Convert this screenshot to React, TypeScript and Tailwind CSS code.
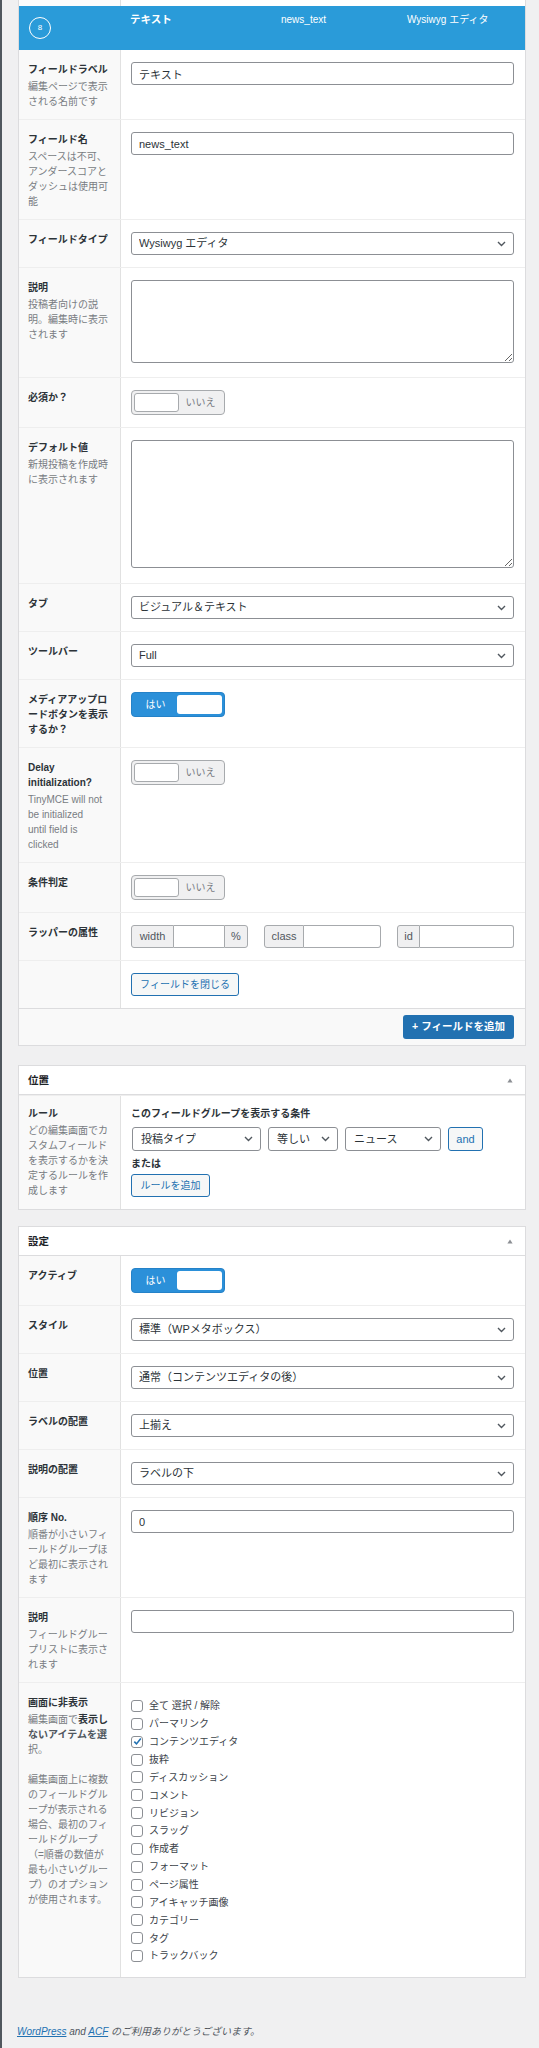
import React from 'react';

type Line = React.ReactNode;

function Chevron() {
  return (
    <svg width="9" height="6" viewBox="0 0 9 6" className="shrink-0">
      <path d="M1 1l3.5 3.5L8 1" fill="none" stroke="#50575e" strokeWidth="1.4" />
    </svg>
  );
}

function Select({ value, className = 'w-full' }: { value: string; className?: string }) {
  return (
    <div className={`flex items-center justify-between h-[23px] pl-[7px] pr-[7px] bg-white border border-[#8c8f94] rounded-[3px] text-[11px] text-[#2c3338] ${className}`}>
      <span className="truncate">{value}</span>
      <Chevron />
    </div>
  );
}

function TextInput({ value }: { value: string }) {
  return (
    <input
      readOnly
      defaultValue={value}
      className="block w-full h-[23px] px-[7px] bg-white border border-[#8c8f94] rounded-[3px] text-[11px] text-[#2c3338] outline-none"
    />
  );
}

function TextArea({ height }: { height: string }) {
  return (
    <textarea
      readOnly
      className={`block w-full ${height} bg-white border border-[#8c8f94] rounded-[3px] resize-y outline-none`}
    />
  );
}

function Toggle({ on }: { on: boolean }) {
  if (on) {
    return (
      <div className="flex items-center w-[94px] h-[25px] p-[2px] rounded-[4px] bg-[#2b90d9] border border-[#2582c8]">
        <span className="flex-1 text-center text-[10px] text-white">はい</span>
        <span className="w-[45px] h-full bg-white rounded-[3px]" />
      </div>
    );
  }
  return (
    <div className="flex items-center w-[94px] h-[25px] p-[2px] rounded-[4px] bg-[#f0f0f1] border border-[#a7aaad]">
      <span className="w-[45px] h-full bg-white rounded-[3px] border border-[#a7aaad]" />
      <span className="flex-1 text-center text-[10px] text-[#787c82]">いいえ</span>
    </div>
  );
}

function Addon({ text, className }: { text: string; className: string }) {
  return (
    <span className={`flex items-center justify-center bg-[#f0f0f1] border border-[#a7aaad] text-[11px] text-[#50575e] ${className}`}>
      {text}
    </span>
  );
}

function SecondaryButton({ children, className = '' }: { children: React.ReactNode; className?: string }) {
  return (
    <span className={`flex items-center justify-center h-[23px] px-[8px] bg-[#f6f7f7] border border-[#2271b1] rounded-[3px] text-[10px] text-[#2271b1] whitespace-nowrap ${className}`}>
      {children}
    </span>
  );
}

// each text line gets a fixed box so mixed Latin/CJK fonts don't stretch the row
function TextLine({ children, className = '' }: { children?: React.ReactNode; className?: string }) {
  return <div className={`h-[15px] text-[10px] leading-[15px] whitespace-nowrap ${className}`}>{children}</div>;
}

function Row({ label, desc, children, pt = 'pt-3' }: { label: Line[]; desc?: Line[]; children?: React.ReactNode; pt?: string }) {
  return (
    <div className="flex border-t border-[#eeeeee] first:border-t-0">
      <div className={`w-[102px] shrink-0 bg-[#f9f9f9] border-r border-[#e1e1e1] ${pt} pb-[10px] pl-[9px] pr-[8px]`}>
        {label.map((l, i) => (
          <TextLine key={i} className="font-bold text-[#2c3338]">{l}</TextLine>
        ))}
        {desc && (
          <div className="mt-[2px]">
            {desc.map((l, i) => (
              <TextLine key={i} className="text-[#787c82]">{l}</TextLine>
            ))}
          </div>
        )}
      </div>
      <div className={`flex-1 min-w-0 ${pt} pb-3 pl-[10px] pr-[11px]`}>{children}</div>
    </div>
  );
}

function PanelHeader({ title }: { title: string }) {
  return (
    <div className="flex items-center justify-between h-[29px] pl-[9px] pr-[12px] border-b border-[#dcdcde]">
      <span className="h-[15px] text-[10.5px] leading-[15px] font-bold text-[#1d2327]">{title}</span>
      <svg width="6" height="5" viewBox="0 0 6 5">
        <path d="M3 0.5L5.6 4.5H0.4z" fill="#8c8f94" />
      </svg>
    </div>
  );
}

const HIDE_ITEMS = [
  { label: '全て 選択 / 解除', checked: false },
  { label: 'パーマリンク', checked: false },
  { label: 'コンテンツエディタ', checked: true },
  { label: '抜粋', checked: false },
  { label: 'ディスカッション', checked: false },
  { label: 'コメント', checked: false },
  { label: 'リビジョン', checked: false },
  { label: 'スラッグ', checked: false },
  { label: '作成者', checked: false },
  { label: 'フォーマット', checked: false },
  { label: 'ページ属性', checked: false },
  { label: 'アイキャッチ画像', checked: false },
  { label: 'カテゴリー', checked: false },
  { label: 'タグ', checked: false },
  { label: 'トラックバック', checked: false },
];

function Checkbox({ checked }: { checked: boolean }) {
  return (
    <span className="flex items-center justify-center w-[12px] h-[12px] shrink-0 bg-white border border-[#8c8f94] rounded-[3px]">
      {checked && (
        <svg width="9" height="9" viewBox="0 0 9 9">
          <path d="M1.3 4.6l2.2 2.3L7.8 1.6" fill="none" stroke="#2271b1" strokeWidth="1.6" />
        </svg>
      )}
    </span>
  );
}

export default function App() {
  return (
    <div className="min-h-[2048px] bg-[#f0f0f1] border-l-2 border-[#50575e] font-['Liberation_Sans','Noto_Sans_CJK_JP',sans-serif]">
      <div className="ml-[16px] mr-[13px]">
        {/* フィールド一覧 */}
        <div className="bg-white border-x border-b border-[#dcdcde]">
          <div className="flex h-[6px]">
            <div className="w-[102px] bg-[#fcfcfc] border-r border-[#e1e1e1]" />
          </div>

          {/* 開いているフィールドのハンドル */}
          <div className="flex h-[44px] bg-[#2a9bd9] text-white">
            <div className="w-[102px] shrink-0 flex items-center pl-[10px]">
              <span className="flex items-center justify-center w-[22px] h-[22px] rounded-full border border-white text-[8px]">8</span>
            </div>
            <div className="w-[151px] shrink-0 pl-[9px] pt-[6px] h-[21px] text-[10.5px] leading-[15px] font-bold">テキスト</div>
            <div className="w-[126px] shrink-0 pl-[9px] pt-[6px] h-[21px] text-[10px] leading-[15px]">news_text</div>
            <div className="pl-[9px] pt-[6px] h-[21px] text-[10px] leading-[15px]">Wysiwyg エディタ</div>
          </div>

          <div>
            <Row label={['フィールドラベル']} desc={['編集ページで表示', 'される名前です']}>
              <TextInput value="テキスト" />
            </Row>
            <Row label={['フィールド名']} desc={['スペースは不可、', 'アンダースコアと', 'ダッシュは使用可', '能']}>
              <TextInput value="news_text" />
            </Row>
            <Row label={['フィールドタイプ']}>
              <Select value="Wysiwyg エディタ" />
            </Row>
            <Row label={['説明']} desc={['投稿者向けの説', '明。編集時に表示', 'されます']}>
              <div className="mb-[2px]">
                <TextArea height="h-[83px]" />
              </div>
            </Row>
            <Row label={['必須か？']}>
              <Toggle on={false} />
            </Row>
            <Row label={['デフォルト値']} desc={['新規投稿を作成時', 'に表示されます']}>
              <div className="mb-[3px]">
                <TextArea height="h-[128px]" />
              </div>
            </Row>
            <Row label={['タブ']}>
              <Select value="ビジュアル＆テキスト" />
            </Row>
            <Row label={['ツールバー']}>
              <Select value="Full" />
            </Row>
            <Row label={['メディアアップロ', 'ードボタンを表示', 'するか？']}>
              <Toggle on />
            </Row>
            <Row label={['Delay', 'initialization?']} desc={['TinyMCE will not', 'be initialized', 'until field is', 'clicked']}>
              <Toggle on={false} />
            </Row>
            <Row label={['条件判定']}>
              <Toggle on={false} />
            </Row>
            <Row label={['ラッパーの属性']}>
              <div className="flex gap-4">
                <div className="flex w-[117px] h-[23px]">
                  <Addon text="width" className="w-[43px] rounded-l-[3px]" />
                  <span className="flex-1 bg-white border-y border-[#a7aaad]" />
                  <Addon text="%" className="w-[24px] rounded-r-[3px]" />
                </div>
                <div className="flex w-[117px] h-[23px]">
                  <Addon text="class" className="w-[40px] rounded-l-[3px]" />
                  <span className="flex-1 bg-white border-y border-r border-[#a7aaad] rounded-r-[3px]" />
                </div>
                <div className="flex w-[117px] h-[23px]">
                  <Addon text="id" className="w-[23px] rounded-l-[3px]" />
                  <span className="flex-1 bg-white border-y border-r border-[#a7aaad] rounded-r-[3px]" />
                </div>
              </div>
            </Row>
            <Row label={[]}>
              <SecondaryButton className="w-[108px]">フィールドを閉じる</SecondaryButton>
            </Row>
          </div>

          <div className="flex justify-end bg-[#f9f9f9] border-t border-[#dcdcde] py-[6px] pr-[11px]">
            <span className="flex items-center justify-center w-[111px] h-[24px] bg-[#2271b1] rounded-[3px] text-[10.5px] font-bold text-white whitespace-nowrap">
              + フィールドを追加
            </span>
          </div>
        </div>

        {/* 位置 */}
        <div className="mt-[19px] bg-white border border-[#dcdcde]">
          <PanelHeader title="位置" />
          <Row
            pt="pt-[10px]"
            label={['ルール']}
            desc={['どの編集画面でカ', 'スタムフィールド', 'を表示するかを決', '定するルールを作', '成します']}
          >
            <TextLine className="font-bold text-[#2c3338]">このフィールドグループを表示する条件</TextLine>
            <div className="flex items-center gap-[7px] mt-[6px] pl-[1px]">
              <Select value="投稿タイプ" className="w-[129px] h-[24px] pl-[8px]" />
              <Select value="等しい" className="w-[70px] h-[24px] pl-[8px]" />
              <Select value="ニュース" className="w-[96px] h-[24px] pl-[8px]" />
              <SecondaryButton className="w-[35px] h-[24px] px-0 text-[11px]">and</SecondaryButton>
            </div>
            <TextLine className="mt-[5px] font-bold text-[#2c3338]">または</TextLine>
            <SecondaryButton className="mt-[3px] w-[79px]">ルールを追加</SecondaryButton>
          </Row>
        </div>

        {/* 設定 */}
        <div className="mt-[16px] bg-white border border-[#dcdcde]">
          <PanelHeader title="設定" />
          <div>
            <Row label={['アクティブ']}>
              <Toggle on />
            </Row>
            <Row label={['スタイル']}>
              <Select value="標準（WPメタボックス）" />
            </Row>
            <Row label={['位置']}>
              <Select value="通常（コンテンツエディタの後）" />
            </Row>
            <Row label={['ラベルの配置']}>
              <Select value="上揃え" />
            </Row>
            <Row label={['説明の配置']}>
              <Select value="ラベルの下" />
            </Row>
            <Row label={['順序 No.']} desc={['順番が小さいフィ', 'ールドグループほ', 'ど最初に表示され', 'ます']}>
              <TextInput value="0" />
            </Row>
            <Row label={['説明']} desc={['フィールドグルー', 'プリストに表示さ', 'れます']}>
              <TextInput value="" />
            </Row>
            <Row
              label={['画面に非表示']}
              desc={[
                <>編集画面で<b className="text-[#2c3338]">表示し</b></>,
                <b className="text-[#50575e]">ないアイテムを選</b>,
                <>択。</>,
                '',
                '編集画面上に複数',
                'のフィールドグル',
                'ープが表示される',
                '場合、最初のフィ',
                'ールドグループ',
                '（=順番の数値が',
                '最も小さいグルー',
                'プ）のオプション',
                'が使用されます。',
              ]}
            >
              <ul className="pt-[2px]">
                {HIDE_ITEMS.map((item) => (
                  <li key={item.label} className="flex items-center gap-[6px] h-[17.86px]">
                    <Checkbox checked={item.checked} />
                    <span className="text-[10px] leading-[15px] text-[#3c434a]">{item.label}</span>
                  </li>
                ))}
              </ul>
            </Row>
          </div>
        </div>
      </div>

      <p className="mt-[46px] ml-[15px] h-[15px] text-[10px] leading-[15px] italic text-[#50575e]">
        <a className="text-[#2271b1] underline">WordPress</a> and <a className="text-[#2271b1] underline">ACF</a> のご利用ありがとうございます。
      </p>
    </div>
  );
}
